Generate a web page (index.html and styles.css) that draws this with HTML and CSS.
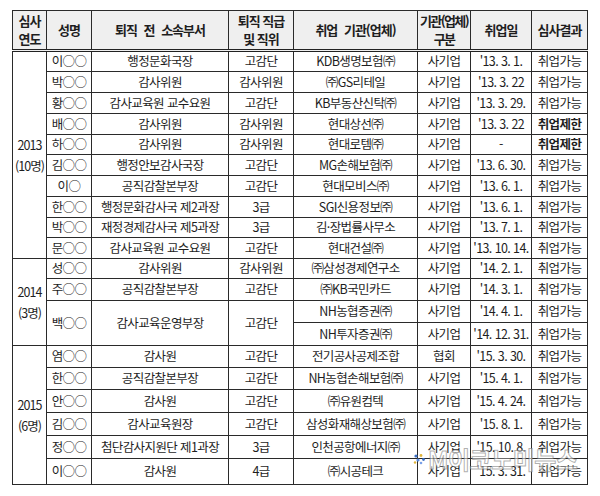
FILE: index.html
```html
<!DOCTYPE html>
<html lang="ko">
<head>
<meta charset="utf-8">
<link rel="stylesheet" href="styles.css">
</head>
<body>
<div class="sheet">
<table class="grid">
<colgroup>
<col class="c-year"><col class="c-name"><col class="c-dept"><col class="c-rank"><col class="c-org"><col class="c-kind"><col class="c-date"><col class="c-res">
</colgroup>
<thead>
<tr class="head">
<th>심사<br>연도</th><th>성명</th><th class="wide">퇴직 전 소속부서</th><th>퇴직 직급<br>및 직위</th><th class="wide">취업 기관(업체)</th><th class="tight">기관(업체)<br>구분</th><th>취업일</th><th>심사결과</th>
</tr>
</thead>
<tbody>
<tr class="h21"><td rowspan="10" class="year">2013<br>(10명)</td><td>이○○</td><td>행정문화국장</td><td>고감단</td><td>KDB생명보험㈜</td><td>사기업</td><td>'13. 3. 1.</td><td>취업가능</td></tr>
<tr class="h21"><td>박○○</td><td>감사위원</td><td>감사위원</td><td>㈜GS리테일</td><td>사기업</td><td>'13. 3. 22</td><td>취업가능</td></tr>
<tr class="h21"><td>황○○</td><td>감사교육원 교수요원</td><td>고감단</td><td>KB부동산신탁㈜</td><td>사기업</td><td>'13. 3. 29.</td><td>취업가능</td></tr>
<tr class="h21"><td>배○○</td><td>감사위원</td><td>감사위원</td><td>현대상선㈜</td><td>사기업</td><td>'13. 3. 22</td><td class="deny">취업제한</td></tr>
<tr class="h20"><td>하○○</td><td>감사위원</td><td>감사위원</td><td>현대로템㈜</td><td>사기업</td><td>-</td><td class="deny">취업제한</td></tr>
<tr class="h21"><td>김○○</td><td>행정안보감사국장</td><td>고감단</td><td>MG손해보험㈜</td><td>사기업</td><td>'13. 6. 30.</td><td>취업가능</td></tr>
<tr class="h21"><td>이○</td><td>공직감찰본부장</td><td>고감단</td><td>현대모비스㈜</td><td>사기업</td><td>'13. 6. 1.</td><td>취업가능</td></tr>
<tr class="h21"><td>한○○</td><td>행정문화감사국 제2과장</td><td>3급</td><td>SGI신용정보㈜</td><td>사기업</td><td>'13. 6. 1.</td><td>취업가능</td></tr>
<tr class="h20"><td>박○○</td><td>재정경제감사국 제5과장</td><td>3급</td><td>김·장법률사무소</td><td>사기업</td><td>'13. 7. 1.</td><td>취업가능</td></tr>
<tr class="h21"><td>문○○</td><td>감사교육원 교수요원</td><td>고감단</td><td>현대건설㈜</td><td>사기업</td><td>'13. 10. 14.</td><td>취업가능</td></tr>

<tr class="h20"><td rowspan="4" class="year">2014<br>(3명)</td><td>성○○</td><td>감사위원</td><td>감사위원</td><td>㈜삼성경제연구소</td><td>사기업</td><td>'14. 2. 1.</td><td>취업가능</td></tr>
<tr class="h22"><td>주○○</td><td>공직감찰본부장</td><td>고감단</td><td>㈜KB국민카드</td><td>사기업</td><td>'14. 3. 1.</td><td>취업가능</td></tr>
<tr class="h22"><td rowspan="2">백○○</td><td rowspan="2">감사교육운영부장</td><td rowspan="2">고감단</td><td>NH농협증권㈜</td><td>사기업</td><td>'14. 4. 1.</td><td>취업가능</td></tr>
<tr class="h23"><td>NH투자증권㈜</td><td>사기업</td><td>'14. 12. 31.</td><td>취업가능</td></tr>

<tr class="h22"><td rowspan="6" class="year">2015<br>(6명)</td><td>염○○</td><td>감사원</td><td>고감단</td><td>전기공사공제조합</td><td>협회</td><td>'15. 3. 30.</td><td>취업가능</td></tr>
<tr class="h22"><td>한○○</td><td>공직감찰본부장</td><td>고감단</td><td>NH농협손해보험㈜</td><td>사기업</td><td>'15. 4. 1.</td><td>취업가능</td></tr>
<tr class="h23"><td>안○○</td><td>감사원</td><td>고감단</td><td>㈜유원컴텍</td><td>사기업</td><td>'15. 4. 24.</td><td>취업가능</td></tr>
<tr class="h23"><td>김○○</td><td>감사교육원장</td><td>고감단</td><td>삼성화재해상보험㈜</td><td>사기업</td><td>'15. 8. 1.</td><td>취업가능</td></tr>
<tr class="h23"><td>정○○</td><td>첨단감사지원단 제1과장</td><td>3급</td><td>인천공항에너지㈜</td><td>사기업</td><td>'15. 10. 8.</td><td>취업가능</td></tr>
<tr class="h26"><td>이○○</td><td>감사원</td><td>4급</td><td>㈜시공테크</td><td>사기업</td><td>'15. 3. 31.</td><td>취업가능</td></tr>
</tbody>
</table>
<div class="mark">
<svg class="mark-logo" width="14" height="12" viewBox="0 0 14 12"><circle cx="3" cy="3" r="1.6" fill="#3b6fc4"/><circle cx="8" cy="2.5" r="1.4" fill="#e0b43a"/><circle cx="5" cy="7" r="1.6" fill="#5a8be0"/><circle cx="10.5" cy="6.5" r="1.4" fill="#3b6fc4"/><circle cx="2" cy="9.5" r="1.2" fill="#e0b43a"/><circle cx="8" cy="10" r="1.3" fill="#7aa0e8"/></svg>
<span class="mark-text">M이코노미뉴스</span>
</div>
</div>
</body>
</html>
```

FILE: styles.css
```css
html, body {
  margin: 0;
  padding: 0;
  background: #ffffff;
}

.sheet {
  position: relative;
  width: 600px;
  height: 496px;
  padding: 10px 0 0 12px;
  box-sizing: border-box;
}

.grid {
  border-collapse: collapse;
  table-layout: fixed;
  width: 575px;
  font-family: "Noto Sans CJK KR", "Noto Sans", sans-serif;
  font-size: 12.5px;
  letter-spacing: -0.6px;
  color: #1e1e1e;
  border: 1px solid #222;
}

.c-year { width: 34px; }
.c-name { width: 45px; }
.c-dept { width: 137px; }
.c-rank { width: 65px; }
.c-org { width: 124px; }
.c-kind { width: 53px; }
.c-date { width: 61px; }
.c-res { width: 56px; }

.grid th,
.grid td {
  border: 1px solid #2a2a2a;
  padding: 0;
  text-align: center;
  vertical-align: middle;
  white-space: nowrap;
  line-height: 1;
}

.grid th {
  background: #efefef;
  font-weight: 700;
  font-size: 13px;
  letter-spacing: -1px;
  line-height: 18px;
  border-bottom: 3px double #222;
}

.grid th.wide { word-spacing: 4px; }
.grid th.tight { letter-spacing: -1.6px; }

.head { height: 40px; }
.h20 { height: 20px; }
.h21 { height: 21px; }
.h22 { height: 22px; }
.h23 { height: 23px; }
.h26 { height: 26px; }

.grid td.year {
  line-height: 21px;
  letter-spacing: -1px;
}

.grid td.deny {
  font-weight: 700;
}

.mark {
  position: absolute;
  left: 413px;
  top: 441px;
  display: flex;
  align-items: center;
  gap: 1px;
  pointer-events: none;
}

.mark-text {
  font-family: "Noto Sans CJK KR", "Noto Sans", sans-serif;
  font-weight: 700;
  font-size: 24px;
  letter-spacing: -0.5px;
  color: rgba(255, 255, 255, 0.55);
  -webkit-text-stroke: 1px rgba(110, 110, 110, 0.55);
}
```
